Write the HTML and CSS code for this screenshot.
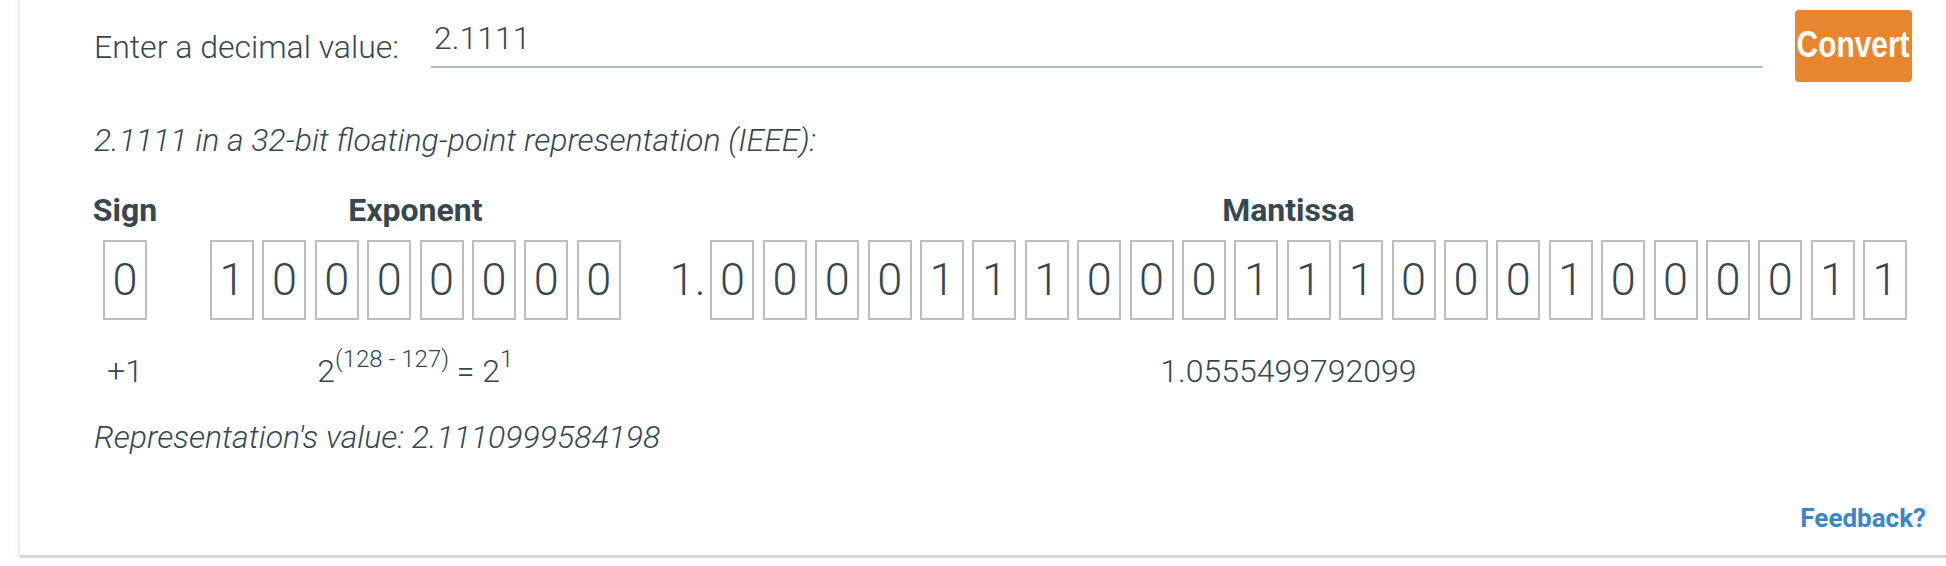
FILE: index.html
```html
<!DOCTYPE html>
<html lang="en">
<head>
<meta charset="utf-8">
<title>Decimal to IEEE 754</title>
<link rel="stylesheet" href="styles.css">
</head>
<body>
<div class="card">
  <div class="input-row">
    <label class="label" for="dec">Enter a decimal value:</label>
    <input id="dec" class="dec-input" type="text" value="2.1111">
    <button class="convert" type="button"><span class="convert-text">Convert</span></button>
  </div>
  <p class="caption">2.1111 in a 32-bit floating-point representation (IEEE):</p>
  <div class="fields">
    <div class="col col-sign">
      <div class="head">Sign</div>
      <div class="bits"><span class="bit">0</span></div>
      <div class="value">+1</div>
    </div>
    <div class="col col-exp">
      <div class="head">Exponent</div>
      <div class="bits">
        <span class="bit">1</span><span class="bit">0</span><span class="bit">0</span><span class="bit">0</span><span class="bit">0</span><span class="bit">0</span><span class="bit">0</span><span class="bit">0</span>
      </div>
      <div class="value">2<sup class="sup">(128 - 127)</sup> = 2<sup class="sup">1</sup></div>
    </div>
    <div class="col col-man">
      <div class="head">Mantissa</div>
      <div class="bits">
        <span class="lead">1.</span><span class="bit">0</span><span class="bit">0</span><span class="bit">0</span><span class="bit">0</span><span class="bit">1</span><span class="bit">1</span><span class="bit">1</span><span class="bit">0</span><span class="bit">0</span><span class="bit">0</span><span class="bit">1</span><span class="bit">1</span><span class="bit">1</span><span class="bit">0</span><span class="bit">0</span><span class="bit">0</span><span class="bit">1</span><span class="bit">0</span><span class="bit">0</span><span class="bit">0</span><span class="bit">0</span><span class="bit">1</span><span class="bit">1</span>
      </div>
      <div class="value">1.0555499792099</div>
    </div>
  </div>
  <p class="result">Representation's value: 2.1110999584198</p>
  <div class="feedback-row"><a class="feedback" href="#">Feedback?</a></div>
</div>
</body>
</html>
```

FILE: styles.css
```css
html {
  margin: 0;
  padding: 0;
  background: #ffffff;
}

body {
  margin: 0;
  padding: 1px 0 0 0;
  font-family: Roboto, "Noto Sans", "Liberation Sans", sans-serif;
  color: #37474f;
}

.card {
  box-sizing: border-box;
  width: 1926px;
  margin: -21px 0 0 20px;
  padding: 30px 20px 19px 74px;
  background: #ffffff;
  border-bottom: 3px solid #d6d6d6;
  box-shadow: 0 3px 4px rgba(0, 0, 0, 0.12), 0 0 8px rgba(0, 0, 0, 0.08);
}

.input-row {
  display: flex;
  align-items: flex-start;
  height: 72px;
}

.label {
  flex: none;
  width: 337px;
  margin-top: 17px;
  font-size: 32px;
  font-weight: 300;
  line-height: 40px;
}

.dec-input {
  flex: 1;
  min-width: 0;
  box-sizing: border-box;
  height: 58px;
  margin: 0 32px 0 0;
  padding: 0 0 0 3px;
  border: 0;
  border-bottom: 2px solid #b0bec5;
  background: transparent;
  font-family: Roboto, "Noto Sans", sans-serif;
  font-size: 32px;
  font-weight: 300;
  color: #37474f;
  outline: none;
}

.convert {
  flex: none;
  display: flex;
  align-items: center;
  justify-content: center;
  width: 117px;
  height: 72px;
  margin: 0 14px 0 0;
  padding: 0;
  border: 0;
  border-radius: 4px;
  background: #e7862f;
  color: #ffffff;
  overflow: visible;
}

.convert-text {
  display: inline-block;
  font-family: "Liberation Sans", Arial, sans-serif;
  font-weight: 700;
  font-size: 36px;
  line-height: 40px;
  white-space: nowrap;
  transform: scaleX(0.83);
  margin-top: -2px;
}

.caption {
  margin: 38px 0 0 0;
  font-size: 32px;
  font-style: italic;
  font-weight: 300;
  line-height: 40px;
}

.fields {
  display: flex;
  margin-top: 30px;
}

.col {
  display: flex;
  flex-direction: column;
  align-items: center;
  flex: none;
}

.col-sign { width: 62px; }
.col-exp { margin-left: 54px; }
.col-man { margin-left: 49px; }

.head {
  font-size: 32px;
  font-weight: 700;
  line-height: 40px;
  white-space: nowrap;
}

.bits {
  display: flex;
  align-items: center;
  gap: 8.4px;
  height: 80px;
  margin-top: 10px;
}

.bit {
  box-sizing: border-box;
  width: 44px;
  height: 80px;
  border: 2px solid #bdbdbd;
  text-align: center;
  font-size: 45px;
  font-weight: 300;
  line-height: 76px;
}

.lead {
  font-size: 45px;
  font-weight: 300;
  line-height: 80px;
  margin-right: -3.4px;
}

.value {
  margin-top: 31px;
  font-size: 32px;
  font-weight: 300;
  line-height: 40px;
  white-space: nowrap;
}

.sup {
  font-size: 24px;
  line-height: 0;
  vertical-align: 15px;
}

.result {
  margin: 26px 0 0 0;
  font-size: 32px;
  font-style: italic;
  font-weight: 300;
  line-height: 40px;
}

.feedback-row {
  display: flex;
  justify-content: flex-end;
  margin-top: 43px;
}

.feedback {
  font-size: 26px;
  font-weight: 700;
  line-height: 36px;
  color: #3a86c8;
  text-decoration: none;
}
```
